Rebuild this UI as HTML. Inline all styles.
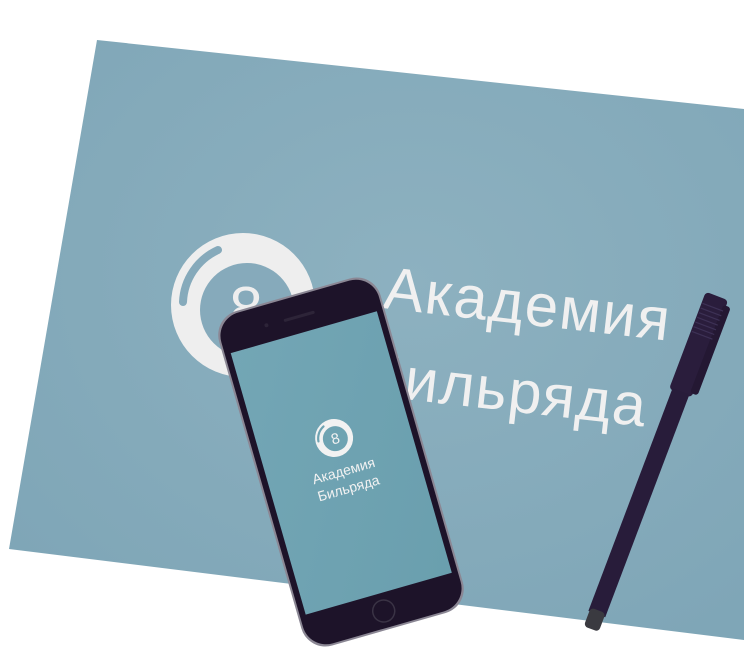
<!DOCTYPE html>
<html><head><meta charset="utf-8"><style>
html,body{margin:0;padding:0;background:#fff;width:744px;height:672px;overflow:hidden}
svg{display:block}
text{font-family:"Liberation Sans","DejaVu Sans",sans-serif}
</style></head><body>
<svg width="744" height="672" viewBox="0 0 744 672" xmlns="http://www.w3.org/2000/svg">
<defs>
<radialGradient id="cg" cx="0.55" cy="0.4" r="0.7">
<stop offset="0" stop-color="#8db1c0"/><stop offset="1" stop-color="#7fa6b7"/>
</radialGradient>
<linearGradient id="sg" x1="0" y1="0" x2="1" y2="1">
<stop offset="0" stop-color="#73a6b5"/><stop offset="1" stop-color="#6a9fae"/>
</linearGradient>
</defs>
<polygon points="97,40 744,109 744,640 9,549" fill="url(#cg)"/>
<!-- big logo -->
<g transform="translate(243,305)">
<circle r="72" fill="#eeeeee"/>
<circle cx="4" cy="5" r="47" fill="#86aabb"/>
<path d="M-60,-3 A60,60 0 0 1 -25,-55" fill="none" stroke="#86aabb" stroke-width="8" stroke-linecap="round"/>
<text x="3" y="24" font-size="60" fill="#eeeeee" text-anchor="middle">8</text>
</g>
<g transform="rotate(6.5 382 308)" fill="#f0f0f0">
<text x="382" y="308" font-size="60" letter-spacing="1.5">Академия</text>
<text x="372" y="396" font-size="60" letter-spacing="1.5">Бильряда</text>
</g>
<!-- pen -->
<g transform="translate(717,296) rotate(20.7)">
<rect x="-12" y="0" width="24" height="104" rx="4" fill="#2a1d3c"/>
<rect x="9" y="6" width="8" height="94" rx="3" fill="#241833"/>
<g stroke="#3d3155" stroke-width="1.2">
<line x1="-11" y1="12" x2="11" y2="12"/><line x1="-11" y1="17" x2="11" y2="17"/><line x1="-11" y1="22" x2="11" y2="22"/><line x1="-11" y1="27" x2="11" y2="27"/><line x1="-11" y1="32" x2="11" y2="32"/><line x1="-11" y1="37" x2="11" y2="37"/><line x1="-11" y1="42" x2="11" y2="42"/>
</g>
<rect x="-9" y="102" width="18" height="238" fill="#281c3a"/>
<rect x="-8" y="336" width="16" height="20" rx="4" fill="#3a3a40"/>
</g>
<!-- phone -->
<g transform="translate(341,462) rotate(-16)">
<rect x="-84" y="-174" width="168" height="348" rx="25" fill="#8b8794"/>
<rect x="-82" y="-172" width="164" height="344" rx="24" fill="#1d1329"/>
<rect x="-76" y="-135" width="152" height="272" fill="url(#sg)"/>
<rect x="-16" y="-153" width="32" height="3" rx="1.5" fill="#2d2438"/>
<circle cx="-34" cy="-152" r="2" fill="#2d2438"/>
<circle cx="0" cy="155" r="11" fill="none" stroke="#3a3345" stroke-width="1.5"/>
<g transform="translate(0,-25)">
<circle r="19" fill="#f2f2f2"/>
<circle cx="1" cy="1" r="12.5" fill="#6ea3b2"/>
<path d="M-16,-1 A16,16 0 0 1 -7,-14" fill="none" stroke="#6ea3b2" stroke-width="2.2" stroke-linecap="round"/>
<text x="1" y="6" font-size="15" fill="#f2f2f2" text-anchor="middle">8</text>
</g>
<text x="0" y="14" font-size="14" fill="#f2f2f2" text-anchor="middle">Академия</text>
<text x="0" y="32" font-size="14" fill="#f2f2f2" text-anchor="middle">Бильряда</text>
</g>
</svg>
</body></html>
